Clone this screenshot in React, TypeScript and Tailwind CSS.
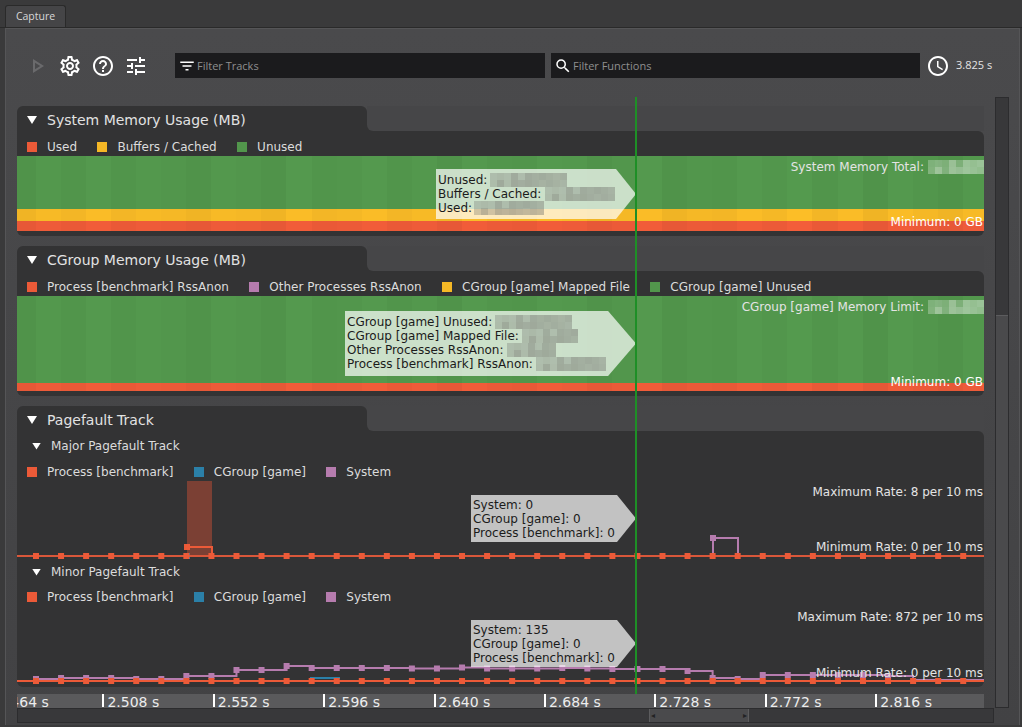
import { MdAccessTime, MdFilterList, MdHelpOutline, MdOutlinePlayArrow, MdOutlineSettings, MdSearch, MdTune } from "react-icons/md";

const RED = "#ec5a38";
const YELLOW = "#f5b826";
const GREEN = "#52964c";
const BLUE = "#2b80a8";
const PURPLE = "#b67cae";

// per-column shading of the memory charts
const shades = [
  0.98, 1.01, 0.99, 1.02, 0.99, 1.01, 1.0, 0.98, 1.01, 1.0, 0.98, 1.02, 0.99, 1.0, 1.02, 0.99, 1.01, 0.98, 1.02, 1.0,
  0.99, 1.02, 1.01, 0.98, 1.0, 1.02, 0.98, 1.0, 0.99, 1.02, 1.0, 1.03, 0.99, 1.02, 0.98, 1.02, 1.0, 0.98, 1.01, 1.0,
];

const sampleX = Array.from({ length: 38 }, (_, i) => 19 + i * 25.06);

const minorSystem = [
  679, 678, 678, 678, 679, 679, 676, 676, 670, 670, 666, 668, 668, 668, 668, 668.5, 668.5, 667.5, 668.5, 668.5, 668.5,
  668, 668.5, 669, 669, 669, 671, 678, 679, 675, 675, 675, 675, 675, 676, 680, 680, 680,
].map((y) => y - 606);

const Redacted = ({ cells, dark }: { cells: number; dark?: boolean }) => (
  <span className="inline-grid grid-rows-2 grid-flow-col h-[14px] align-middle">
    {Array.from({ length: cells * 2 }, (_, i) => {
      const a = (dark ? 0.3 : 0.26) + ((i * 7 + (i % 3) * 5) % 11) * 0.018;
      return (
        <span
          key={i}
          className="w-[7px] h-[7px]"
          style={{ backgroundColor: dark ? `rgba(110,110,105,${a})` : `rgba(255,255,255,${a})` }}
        />
      );
    })}
  </span>
);

const Triangle = ({ small }: { small?: boolean }) => (
  <span
    className={
      small
        ? "inline-block w-[9px] h-[7px] bg-white [clip-path:polygon(0_0,100%_0,50%_100%)]"
        : "inline-block w-[10px] h-[8px] bg-white [clip-path:polygon(0_0,100%_0,50%_100%)]"
    }
  />
);

const Legend = ({ items }: { items: { label: string; color: string }[] }) => (
  <div className="flex items-center gap-[20.4px] pl-[10px] text-[12px] text-[#dcdcdc]">
    {items.map((item) => (
      <div key={item.label} className="flex items-center gap-[10px]">
        <span className="w-[10px] h-[10px]" style={{ backgroundColor: item.color }} />
        <span className="whitespace-nowrap">{item.label}</span>
      </div>
    ))}
  </div>
);

const TrackShell = ({ title, className, children }: { title: string; className: string; children: React.ReactNode }) => (
  <section className={`flex flex-col shrink-0 ${className}`}>
    <div className="flex h-[25px] shrink-0">
      <div className="w-[350px] bg-[#333334] rounded-t-[6px] flex items-center gap-[10px] pl-[10px] pt-[3px] text-[14px] text-[#e2e2e2]">
        <Triangle />
        <span className="whitespace-nowrap">{title}</span>
      </div>
      <div className="flex-1 bg-[#333334]">
        <div className="h-full bg-[#464648] rounded-bl-[6px]" />
      </div>
    </div>
    <div className="flex-1 flex flex-col bg-[#333334] rounded-b-[6px] rounded-tr-[6px]">{children}</div>
  </section>
);

const Tooltip = ({ className, children }: { className: string; children: React.ReactNode }) => (
  <div className={`absolute flex flex-col justify-center pl-[2px] text-[12px] leading-[14px] text-[#1b1b1b] whitespace-nowrap ${className}`}>
    {children}
  </div>
);

const MemoryChart = ({ height, bands, children }: { height: string; bands: { color: string; h: string }[]; children: React.ReactNode }) => (
  <div className={`relative flex overflow-hidden ${height}`}>
    {shades.map((b, i) => (
      <div key={i} className={`flex flex-col h-full shrink-0 ${i === 0 ? "w-[19px]" : "w-[25.06px]"}`} style={{ filter: `brightness(${b})` }}>
        <div className="flex-1" style={{ backgroundColor: GREEN }} />
        {bands.map((band) => (
          <div key={band.color} className={band.h} style={{ backgroundColor: band.color }} />
        ))}
      </div>
    ))}
    {children}
  </div>
);

const Marker = ({ x, y, color }: { x: number; y: number; color: string }) => (
  <rect x={x - 3} y={y - 3} width="6" height="6" fill={color} />
);

const stepPath = (values: number[]) =>
  values.map((y, i) => `${i === 0 ? "M" : "L"}${sampleX[i]} ${i === 0 ? y : values[i - 1]} L${sampleX[i]} ${y}`).join(" ") +
  ` L967 ${values[values.length - 1]}`;

const MajorGraph = () => (
  <svg width="967" height="78" className="block">
    <rect x="170" y="0" width="25" height="75" fill="#7b4034" />
    <path d="M170 66 H195 V75" fill="none" stroke={RED} strokeWidth="2" />
    <path d="M170 75 H195" fill="none" stroke={BLUE} strokeWidth="2" />
    <Marker x={170} y={75} color={BLUE} />
    <Marker x={170} y={66} color={RED} />
    <path d="M696 75 V57 H721 V75" fill="none" stroke={PURPLE} strokeWidth="2" />
    <Marker x={696} y={57} color={PURPLE} />
    <path d="M0 75 H967" stroke="#d9573a" strokeWidth="2" />
    {sampleX.map((x) => (
      <Marker key={x} x={x} y={75} color={RED} />
    ))}
  </svg>
);

const MinorGraph = () => (
  <svg width="967" height="78" className="block">
    <path d={stepPath(minorSystem)} fill="none" stroke={PURPLE} strokeWidth="2" />
    {minorSystem.slice(0, 35).map((y, i) => (
      <Marker key={i} x={sampleX[i]} y={y} color={PURPLE} />
    ))}
    <path d="M293 72 H323" stroke={BLUE} strokeWidth="2" />
    <path d="M0 75 H967" stroke={RED} strokeWidth="2" />
    {sampleX.map((x) => (
      <Marker key={x} x={x} y={75} color={RED} />
    ))}
  </svg>
);

const timeLabels = ["2.464 s", "2.508 s", "2.552 s", "2.596 s", "2.640 s", "2.684 s", "2.728 s", "2.772 s", "2.816 s"];

const RateLabel = ({ className, children }: { className: string; children: React.ReactNode }) => (
  <span className={`absolute right-[1px] text-[12px] leading-[14px] text-[#e4e4e4] whitespace-nowrap ${className}`}>{children}</span>
);

export default function App() {
  return (
    <div className="w-[1022px] h-[727px] overflow-hidden bg-[#3a3a3b] flex flex-col font-['DejaVu_Sans',sans-serif]">
      {/* Tab bar */}
      <div className="h-[28px] shrink-0 pt-[5px] pl-[5px] border-b border-[#2a2a2a]">
        <div className="w-[61px] h-[22px] bg-[#454547] border border-b-0 border-[#2a2a2a] rounded-t-[3px] flex items-center justify-center text-[10.5px] text-[#d8d8d8] font-['Open_Sans',sans-serif]">
          Capture
        </div>
      </div>

      <div className="flex-1 mx-[5px] mr-[2px] mb-[2px] bg-linear-to-b from-[#4a4a4c] to-[#424244] border-l border-r border-t border-[#555557] pl-[11px] flex flex-col">
        {/* Toolbar */}
        <div className="h-[25px] mt-[24px] shrink-0 flex items-center font-['Open_Sans',sans-serif]">
          <div className="w-[158px] flex items-center pl-[8px] text-white">
            <MdOutlinePlayArrow className="w-[24px] h-[24px] text-[#6a6a6c] shrink-0 mr-[9px]" />
            <MdOutlineSettings className="w-[24px] h-[24px] shrink-0 mr-[9px]" />
            <MdHelpOutline className="w-[24px] h-[24px] shrink-0 mr-[9px]" />
            <MdTune className="w-[24px] h-[24px] shrink-0" />
          </div>
          <div className="w-[370px] h-[25px] bg-[#1b1b1d] flex items-center pl-[3px] gap-[1px] text-[11px] text-[#8f8f8f]">
            <MdFilterList className="w-[18px] h-[18px] text-white" />
            <span className="pt-[1px]">Filter Tracks</span>
          </div>
          <div className="w-[369px] h-[25px] ml-[6px] bg-[#1b1b1d] flex items-center pl-[3px] gap-[1px] text-[11px] text-[#8f8f8f]">
            <MdSearch className="w-[18px] h-[18px] text-white" />
            <span className="pt-[1px]">Filter Functions</span>
          </div>
          <MdAccessTime className="w-[24px] h-[24px] ml-[6px] text-white shrink-0" />
          <span className="ml-[6px] text-[11px] text-[#e4e4e4] whitespace-nowrap">3.825 s</span>
        </div>

        {/* Tracks + vertical scrollbar */}
        <div className="mt-[19px] h-[612px] shrink-0 flex">
          <div className="w-[967px] shrink-0 flex flex-col">
            <div className="relative h-[597px] shrink-0 overflow-hidden flex flex-col gap-[10px] pt-[9px]">
              <TrackShell title="System Memory Usage (MB)" className="h-[130px]">
                <div className="h-[25px] flex items-center pt-[7px] shrink-0">
                  <Legend
                    items={[
                      { label: "Used", color: RED },
                      { label: "Buffers / Cached", color: YELLOW },
                      { label: "Unused", color: GREEN },
                    ]}
                  />
                </div>
                <MemoryChart
                  height="h-[75px]"
                  bands={[
                    { color: YELLOW, h: "h-[12px]" },
                    { color: RED, h: "h-[10px]" },
                  ]}
                >
                  <RateLabel className="top-[4px] !right-0 flex items-center gap-[4px]">
                    System Memory Total: <Redacted cells={8} />
                  </RateLabel>
                  <RateLabel className="bottom-[2px] text-white">Minimum: 0 GB</RateLabel>
                  <Tooltip className="left-[419px] top-[13px] w-[200px] h-[50px] bg-white/70 [clip-path:polygon(0_0,90%_0,100%_50%,90%_100%,0_100%)]">
                    <div className="flex items-center gap-[3px]">Unused: <Redacted cells={11} dark /></div>
                    <div className="flex items-center gap-[4px]">Buffers / Cached: <Redacted cells={10} dark /></div>
                    <div className="flex items-center gap-[2px]">Used: <Redacted cells={10} dark /></div>
                  </Tooltip>
                </MemoryChart>
              </TrackShell>

              <TrackShell title="CGroup Memory Usage (MB)" className="h-[150px]">
                <div className="h-[25px] flex items-center pt-[7px] shrink-0">
                  <Legend
                    items={[
                      { label: "Process [benchmark] RssAnon", color: RED },
                      { label: "Other Processes RssAnon", color: PURPLE },
                      { label: "CGroup [game] Mapped File", color: YELLOW },
                      { label: "CGroup [game] Unused", color: GREEN },
                    ]}
                  />
                </div>
                <MemoryChart height="h-[95px]" bands={[{ color: RED, h: "h-[8px]" }]}>
                  <RateLabel className="top-[4px] !right-0 flex items-center gap-[4px]">
                    CGroup [game] Memory Limit: <Redacted cells={8} />
                  </RateLabel>
                  <RateLabel className="bottom-[2px] text-white">Minimum: 0 GB</RateLabel>
                  <Tooltip className="left-[328px] top-[15px] w-[291px] h-[65px] pb-[2px] bg-white/70 [clip-path:polygon(0_0,90.4%_0,100%_50%,90.4%_100%,0_100%)]">
                    <div className="flex items-center gap-[3px]">CGroup [game] Unused: <Redacted cells={11} dark /></div>
                    <div className="flex items-center gap-[3px]">CGroup [game] Mapped File: <Redacted cells={8} dark /></div>
                    <div className="flex items-center gap-[3px]">Other Processes RssAnon: <Redacted cells={7} dark /></div>
                    <div className="flex items-center gap-[3px]">Process [benchmark] RssAnon: <Redacted cells={10} dark /></div>
                  </Tooltip>
                </MemoryChart>
              </TrackShell>

              <TrackShell title="Pagefault Track" className="h-[281px]">
                <div className="h-[26px] pt-[4px] flex items-center gap-[10px] pl-[15px] text-[12px] text-[#dcdcdc] shrink-0">
                  <Triangle small />
                  <span>Major Pagefault Track</span>
                </div>
                <div className="h-[24px] flex items-center pt-[6px] shrink-0">
                  <Legend
                    items={[
                      { label: "Process [benchmark]", color: RED },
                      { label: "CGroup [game]", color: BLUE },
                      { label: "System", color: PURPLE },
                    ]}
                  />
                </div>
                <div className="relative h-[78px] shrink-0">
                  <MajorGraph />
                  <RateLabel className="top-[4px]">Maximum Rate: 8 per 10 ms</RateLabel>
                  <RateLabel className="top-[59px]">Minimum Rate: 0 per 10 ms</RateLabel>
                  <Tooltip className="left-[454px] top-[14px] w-[165px] h-[47px] bg-white/70 [clip-path:polygon(0_0,88.5%_0,100%_50%,88.5%_100%,0_100%)]">
                    <div>System: 0</div>
                    <div>CGroup [game]: 0</div>
                    <div>Process [benchmark]: 0</div>
                  </Tooltip>
                </div>
                <div className="h-[26px] flex items-center gap-[10px] pl-[15px] text-[12px] text-[#dcdcdc] shrink-0">
                  <Triangle small />
                  <span>Minor Pagefault Track</span>
                </div>
                <div className="h-[21px] flex items-center pt-[2px] shrink-0">
                  <Legend
                    items={[
                      { label: "Process [benchmark]", color: RED },
                      { label: "CGroup [game]", color: BLUE },
                      { label: "System", color: PURPLE },
                    ]}
                  />
                </div>
                <div className="relative h-[78px] shrink-0">
                  <MinorGraph />
                  <RateLabel className="top-[4px]">Maximum Rate: 872 per 10 ms</RateLabel>
                  <RateLabel className="top-[60px]">Minimum Rate: 0 per 10 ms</RateLabel>
                  <Tooltip className="left-[454px] top-[14px] w-[165px] h-[47px] bg-white/70 [clip-path:polygon(0_0,88.5%_0,100%_50%,88.5%_100%,0_100%)]">
                    <div>System: 135</div>
                    <div>CGroup [game]: 0</div>
                    <div>Process [benchmark]: 0</div>
                  </Tooltip>
                </div>
              </TrackShell>

              {/* Time marker */}
              <div className="absolute left-[618px] top-0 bottom-0 w-[2px] bg-[#1e8f26]" />
            </div>

            {/* Time axis */}
            <div className="h-[15px] shrink-0 bg-[#5a5a5c] overflow-hidden">
              <div className="flex -ml-[25px]">
                {timeLabels.map((label) => (
                  <div key={label} className="w-[110.4px] shrink-0 h-[13px] border-l-2 border-white pl-[3px] text-[14px] leading-[17px] text-[#ececec] whitespace-nowrap">
                    {label}
                  </div>
                ))}
              </div>
            </div>
          </div>

          {/* Vertical scrollbar */}
          <div className="ml-[11px] w-[14px] h-[611px] bg-[#38383a] border border-[#2c2c2e] flex flex-col">
            <div className="mt-[217px] flex-1 bg-[#4a4a4c] border-t border-[#5c5c5e]" />
          </div>
        </div>

        {/* Horizontal scrollbar */}
        <div className="w-[977px] h-[15px] shrink-0 -mt-[1px] bg-[#38383a] border border-[#2c2c2e] flex items-center pl-[631px]">
          <div className="w-[100px] h-[13px] bg-[#4a4a4c] border-x border-[#5c5c5e] flex items-center justify-between px-[1px] text-[8px] leading-none text-[#222224]">
            <span>◂</span>
            <span>▸</span>
          </div>
        </div>
      </div>
    </div>
  );
}
